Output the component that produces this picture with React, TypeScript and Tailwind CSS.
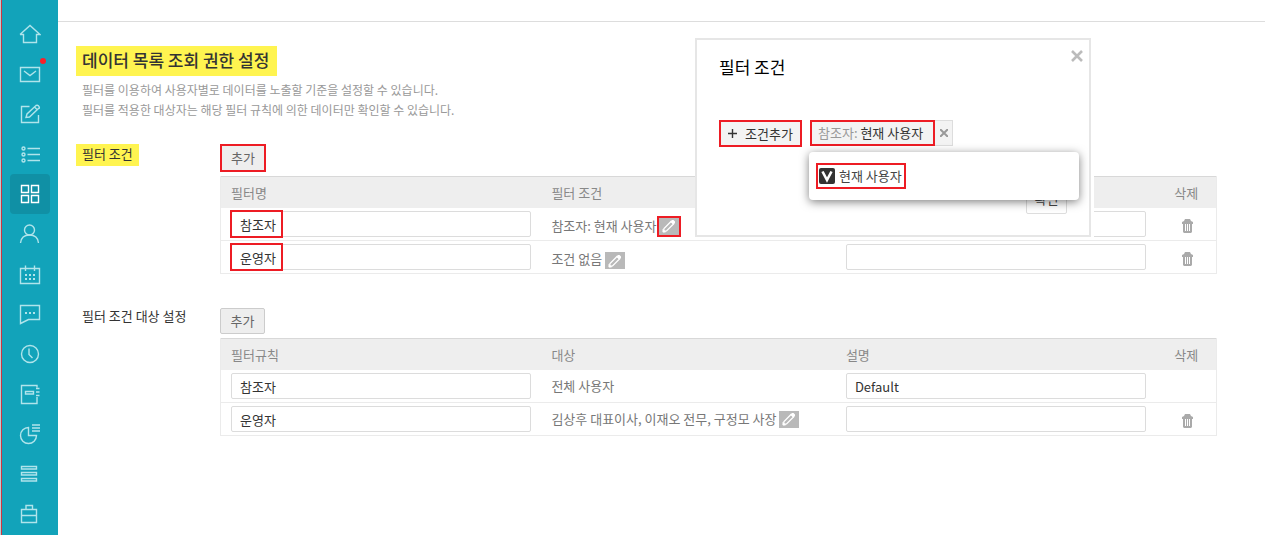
import type { ReactNode } from 'react'

const menus: { name: string; icon: ReactNode; active?: boolean; badge?: boolean }[] = [
  { name: '홈', icon: <path d="M1 11.500 11 2.500 21 11.500H17.500V19.500H4.500V11.500H1" /> },
  { name: '메일', badge: true, icon: <path d="M1.500 4.500H20.500V18.500H1.500ZM5 8 11 12.500 17 8" /> },
  {
    name: '결재',
    icon: <path d="M10.500 3.500H2.500V19.500H19.500V12M7 14.500 8 11 17 2.500Q19 1.500 20 3.500T19.500 5.500L10.500 14ZM15.500 4 18.500 7" />,
  },
  {
    name: '업무',
    icon: (
      <>
        <circle cx="4.500" cy="5.500" r="1.500" />
        <circle cx="4.500" cy="11.500" r="1.500" />
        <circle cx="4.500" cy="17.500" r="1.500" />
        <path d="M8.500 5.500H21M8.500 11.500H21M8.500 17.500H21" />
      </>
    ),
  },
  {
    name: '앱',
    active: true,
    icon: <path d="M2.500 2.500H9.500V9.500H2.500ZM12.500 2.500H19.500V9.500H12.500ZM2.500 12.500H9.500V19.500H2.500ZM12.500 12.500H19.500V19.500H12.500Z" />,
  },
  {
    name: '주소록',
    icon: (
      <>
        <circle cx="10.500" cy="7" r="5" />
        <path d="M1.500 20C2 15 5.500 12 10.500 12S19 15 19.500 20" />
      </>
    ),
  },
  {
    name: '캘린더',
    icon: (
      <>
        <path d="M1.500 5.500H20.500V20.500H1.500ZM6.500 2.500V8M15.500 2.500V8" />
        <path d="M6 12H16M6 16H16" strokeWidth="2" strokeDasharray="2 2" />
      </>
    ),
  },
  {
    name: '메신저',
    icon: (
      <>
        <path d="M1.500 2.500H20.500V16.500H9.500L1.500 20.500Z" />
        <path d="M6 10H16" strokeWidth="2" strokeDasharray="2 2" />
      </>
    ),
  },
  {
    name: '근태',
    icon: (
      <>
        <circle cx="11" cy="11" r="8.500" />
        <path d="M10 5.500V11.500L13.500 15" />
      </>
    ),
  },
  { name: '보고', icon: <path d="M18 4.500V2.500H2.500V20.500H18V14M6.500 8.500H14.500V11H6.500ZM17 5.500H20.500M17 9H20.500M17 12.500H20.500" /> },
  {
    name: '설문',
    icon: (
      <>
        <path d="M9.500 4.500A8 8 0 1 0 17.500 12.500H9.500Z" />
        <path d="M13 2H21M13 5H21M13 8H21" />
      </>
    ),
  },
  { name: '게시판', icon: <path d="M2.500 3.500H17.500V6H2.500ZM2.500 9.500H17.500V12H2.500ZM2.500 15.500H17.500V18H2.500Z" /> },
  { name: '자료실', icon: <path d="M2.500 6.500H17.500V19.500H2.500ZM7 6.500V2.500H13.500V6.500M2.500 12.500H17.500" /> },
]

function Sidebar() {
  return (
    <nav className="w-[58px] shrink-0 border-l border-[#b9cdd0] bg-[#12a3ba] pt-3.5 shadow-[inset_1px_0_0_#cf3540]">
      <ul className="flex flex-col items-center">
        {menus.map((menu) => (
          <li key={menu.name}>
            <a
              href="#"
              aria-label={menu.name}
              className={
                menu.active
                  ? 'relative flex h-10 w-10 items-center justify-center rounded bg-[#1090a5] text-white'
                  : 'relative flex h-10 w-10 items-center justify-center text-[#b0e4eb]'
              }
            >
              <svg width="22" height="22" viewBox="0 0 22 22" fill="none" stroke="currentColor" strokeWidth="1.4">
                {menu.icon}
              </svg>
              {menu.badge && <span className="absolute top-1 right-1 h-1.5 w-1.5 rounded-full bg-[#f9202a]" />}
            </a>
          </li>
        ))}
      </ul>
    </nav>
  )
}

function TrashButton() {
  return (
    <button type="button" aria-label="삭제" className="block">
      <svg width="11" height="14" viewBox="0 0 11 14" className="block" fill="#aaa">
        <path d="M3 0H8L9 2L11 3V5H0V3L2 2Z" />
        <path d="M1 5H10V13L9 14H2L1 13Z" />
        <path d="M3.500 5V12M5.500 5V12M7.500 5V12" stroke="#fff" />
      </svg>
    </button>
  )
}

function EditButton({ marked }: { marked?: boolean }) {
  return (
    <button
      type="button"
      aria-label="편집"
      className={
        marked
          ? 'flex h-[21px] w-6 items-center justify-center border-2 border-[#ed1c24] bg-[#b9b9b9]'
          : 'ml-[3px] flex h-[17px] w-5 items-center justify-center bg-[#b9b9b9]'
      }
    >
      <svg width="14" height="14" viewBox="0 0 14 14" fill="none" stroke="#fff">
        <path d="M1.500 12.500 2 9.500 9 2.500 11.500 5 4.500 12Z" strokeWidth="1.300" />
        <path d="M8.500 2.500 10 1H11.500L13 2.500V4L11.500 5.500Z" fill="#fff" stroke="none" />
        <path d="M1 13V10.500L3.500 13Z" fill="#fff" />
      </svg>
    </button>
  )
}

function TextField({ label, value, marked }: { label: string; value: string; marked?: boolean }) {
  return (
    <div className="relative">
      <input
        type="text"
        aria-label={label}
        defaultValue={value}
        className="block h-[26px] w-full rounded-xs border border-[#dcdcdc] bg-white px-2 text-[13px] text-[#333]"
      />
      {marked && <Mark />}
    </div>
  )
}

// red frame over the first letters of a field
function Mark() {
  return <span className="pointer-events-none absolute -inset-y-px -left-px w-[53px] border-2 border-[#ed1c24]" />
}

type Row = { name: string; target: string; note: string; editable: boolean; removable: boolean }

const filterRows: Row[] = [
  { name: '참조자', target: '참조자: 현재 사용자', note: '', editable: true, removable: true },
  { name: '운영자', target: '조건 없음', note: '', editable: true, removable: true },
]

const targetRows: Row[] = [
  { name: '참조자', target: '전체 사용자', note: 'Default', editable: false, removable: false },
  { name: '운영자', target: '김상후 대표이사, 이재오 전무, 구정모 사장', note: '', editable: true, removable: true },
]

function SettingTable({ heads, rows, marked }: { heads: string[]; rows: Row[]; marked?: boolean }) {
  return (
    <table className="w-full table-fixed border-separate border-spacing-0 border-x border-[#ebebeb] text-left">
      <colgroup>
        <col className="w-[32.2%]" />
        <col className="w-[29.6%]" />
        <col className="w-[32.2%]" />
        <col className="w-[6%]" />
      </colgroup>
      <thead>
        <tr className="h-8 bg-[#eee] text-[#888]">
          {heads.map((head, i) => (
            <th
              key={i}
              className={i === 3 ? 'border-t border-[#d8d8d8] pl-[18px] font-normal' : 'border-t border-[#d8d8d8] pl-2.5 font-normal'}
            >
              {head}
            </th>
          ))}
        </tr>
      </thead>
      <tbody>
        {rows.map((row, i) => (
          <tr key={row.name} className="h-[33px]">
            <td className="border-b border-[#ebebeb] pr-2.5 pl-2.5">
              <TextField label={heads[0]} value={row.name} marked={marked} />
            </td>
            <td className="border-b border-[#ebebeb] pl-2.5 text-[#777]">
              <div className={marked ? 'flex items-end whitespace-nowrap pt-1' : 'flex items-center whitespace-nowrap'}>
                <span className={marked ? 'self-start' : undefined}>{row.target}</span>
                {row.editable && <EditButton marked={marked && i === 0} />}
              </div>
            </td>
            <td className="border-b border-[#ebebeb] pr-2.5 pl-2.5">
              <TextField label="설명" value={row.note} />
            </td>
            <td className="border-b border-[#ebebeb] pt-1 pl-[26px]">{row.removable && <TrashButton />}</td>
          </tr>
        ))}
      </tbody>
    </table>
  )
}

function FilterDialog() {
  return (
    <div
      role="dialog"
      aria-labelledby="dialog-title"
      className="absolute top-[38px] left-[637px] w-[396px] border-2 border-[#e6e6e6] bg-white px-[22px] pt-[15px] pb-[21px] shadow-[3px_0_0_white]"
    >
      <h2 id="dialog-title" className="text-[17px] leading-6 text-black">
        필터 조건
      </h2>
      <button type="button" aria-label="닫기" className="absolute top-2.5 right-1.5">
        <svg width="12" height="12" viewBox="0 0 12 12" className="block" stroke="#bbb" strokeWidth="2.600">
          <path d="M1 1 11 11M11 1 1 11" />
        </svg>
      </button>
      <div className="mt-[41px] flex gap-2">
        <button
          type="button"
          className="flex h-[27px] w-[83px] items-center justify-center gap-2 border-2 border-[#ed1c24] bg-[#f3f3f3] text-[#333]"
        >
          <svg width="9" height="9" viewBox="0 0 9 9" stroke="currentColor">
            <path d="M4.500 0V9M0 4.500H9" strokeWidth="1.400" />
          </svg>
          <span>조건추가</span>
        </button>
        <div className="relative flex h-[26px]">
          <button
            type="button"
            className="w-[125px] border-2 border-[#ed1c24] bg-[#f3f3f3] pl-1.5 text-left whitespace-nowrap text-[#333]"
          >
            <span className="text-[#999]">참조자:</span> 현재 사용자
          </button>
          <button
            type="button"
            aria-label="조건 삭제"
            className="flex w-[18px] items-center justify-center border border-l-0 border-[#ddd] bg-[#f3f3f3]"
          >
            <svg width="8" height="8" viewBox="0 0 8 8" stroke="#999" strokeWidth="2">
              <path d="M0 0 8 8M8 0 0 8" />
            </svg>
          </button>
          <div className="absolute top-8 -left-px z-10 w-[270px] rounded bg-white px-[7px] py-[11px] shadow-[0_2px_10px_rgba(0,0,0,0.5)]">
            <button type="button" className="flex h-[26px] items-center gap-1 border-2 border-[#ed1c24] pr-0.5 pl-px text-[#444]">
              <svg width="16" height="16" viewBox="0 0 16 16">
                <rect width="16" height="16" rx="2" fill="#333" />
                <path d="M3.500 3.500 8 12 12.500 3.500" fill="none" stroke="#fff" strokeWidth="2.600" />
              </svg>
              현재 사용자
            </button>
          </div>
        </div>
      </div>
      <div className="mt-10 flex justify-end">
        <button type="button" className="h-[27px] w-[41px] rounded-xs border border-[#ddd] bg-white pb-1 text-[#444]">
          확인
        </button>
      </div>
    </div>
  )
}

export default function App() {
  return (
    <div className="flex min-h-screen bg-white font-['Noto_Sans_CJK_KR',sans-serif] text-[13px] leading-5 text-[#333]">
      <Sidebar />
      <main className="relative min-w-0 flex-1">
        <header className="h-[22px] border-b border-[#ddd]" />
        <div className="pt-6 pr-12 pl-[18px]">
          <h1 className="w-fit bg-[#fff450] pr-2 pb-0.5 pl-1.5 text-[17px] leading-7 font-medium">데이터 목록 조회 권한 설정</h1>
          <p className="mt-1 px-1.5 text-[12px] leading-5 text-[#999]">
            필터를 이용하여 사용자별로 데이터를 노출할 기준을 설정할 수 있습니다.
            <br />
            필터를 적용한 대상자는 해당 필터 규칙에 의한 데이터만 확인할 수 있습니다.
          </p>

          <section className="mt-6 flex">
            <h2 className="w-36 shrink-0">
              <span className="block w-fit bg-[#fff450] px-1.5 pb-0.5">필터 조건</span>
            </h2>
            <div className="min-w-0 flex-1">
              <button type="button" className="mb-1 block h-7 w-[46px] border-2 border-[#ed1c24] bg-[#eee] text-[#666]">
                추가
              </button>
              <SettingTable heads={['필터명', '필터 조건', '', '삭제']} rows={filterRows} marked />
            </div>
          </section>

          <section className="mt-[34px] flex">
            <h2 className="w-36 shrink-0 px-1.5 leading-4">필터 조건 대상 설정</h2>
            <div className="min-w-0 flex-1">
              <button type="button" className="mb-1 block h-[26px] w-[45px] rounded-xs border border-[#ccc] bg-[#eee] text-[#666]">
                추가
              </button>
              <SettingTable heads={['필터규칙', '대상', '설명', '삭제']} rows={targetRows} />
            </div>
          </section>
        </div>
        <FilterDialog />
      </main>
    </div>
  )
}
